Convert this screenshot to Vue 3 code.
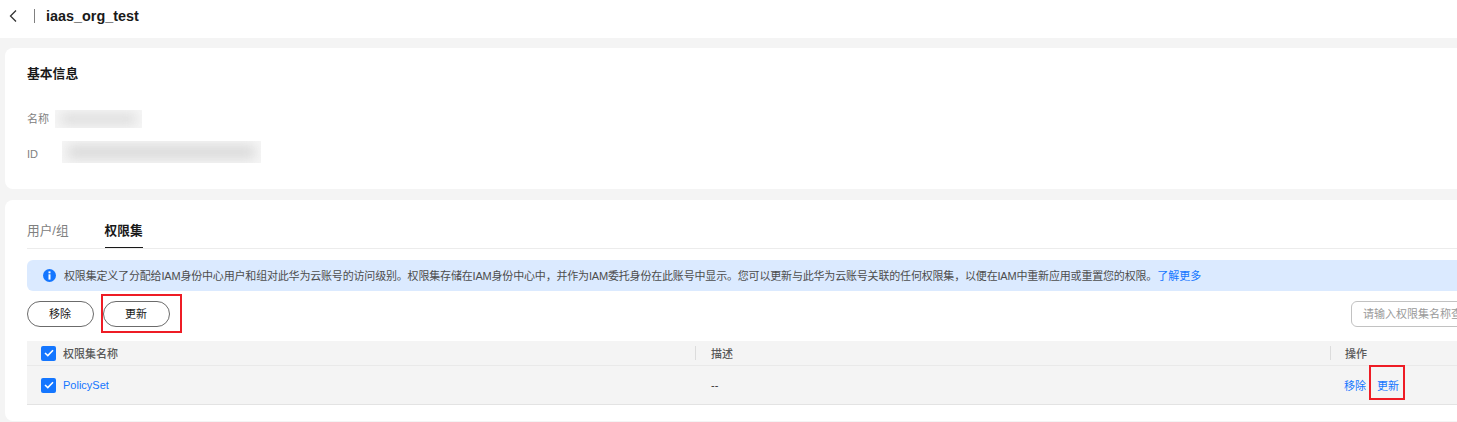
<script setup>
const message = [
  '权限集定义了分配给IAM身份中心用户和组对此华为云账号的访问级别。权限集存储在IAM身份中心中',
  '并作为IAM委托身份在此账号中显示。您可以更新与此华为云账号关联的任何权限集',
  '以便在IAM中重新应用或重置您的权限。',
].join('\uFF0C')
</script>

<template>
  <div class="viewport">
    <div class="page">
      <header class="topbar">
        <svg class="back" width="10" height="14" viewBox="0 0 10 14" fill="none" stroke="#333" stroke-width="1.3">
          <path d="M8 1.5 2.5 7 8 12.5" />
        </svg>
        <span class="sep"></span>
        <h1 class="title">iaas_org_test</h1>
      </header>

      <main class="content">
        <section class="card info">
          <h2 class="section-title">基本信息</h2>
          <div class="field name-field">
            <span class="label">名称</span>
            <span class="mask mask-name"><i></i></span>
          </div>
          <div class="field id-field">
            <span class="label id-label">ID</span>
            <span class="mask mask-id"><i></i></span>
          </div>
        </section>

        <section class="card details">
          <nav class="tabs">
            <span class="tab">用户/组</span>
            <span class="tab active">权限集</span>
          </nav>

          <div class="alert">
            <svg class="alert-icon" width="13" height="13" viewBox="0 0 13 13">
              <circle cx="6.5" cy="6.5" r="6.5" fill="#1476ff" />
              <rect x="5.5" y="2.4" width="2" height="1.9" fill="#fff" />
              <rect x="5.5" y="5.3" width="2" height="5.3" fill="#fff" />
            </svg>
            <span class="alert-text">{{ message }}</span>
            <a class="link learn">了解更多</a>
          </div>

          <div class="toolbar">
            <button class="btn">移除</button>
            <button class="btn marked">更新<span class="red-box box-btn"></span></button>
            <div class="search">请输入权限集名称查询</div>
          </div>

          <div class="table">
            <div class="row head">
              <div class="cell first">
                <span class="check"><svg width="10" height="8" viewBox="0 0 10 8" fill="none" stroke="#fff" stroke-width="1.6"><path d="M1 4 3.8 6.6 9 1.2" /></svg></span>
                <span>权限集名称</span>
              </div>
              <div class="cell divided desc">描述</div>
              <div class="cell divided">操作</div>
            </div>
            <div class="row body">
              <div class="cell first">
                <span class="check"><svg width="10" height="8" viewBox="0 0 10 8" fill="none" stroke="#fff" stroke-width="1.6"><path d="M1 4 3.8 6.6 9 1.2" /></svg></span>
                <a class="link">PolicySet</a>
              </div>
              <div class="cell plain">--</div>
              <div class="cell actions">
                <a class="link">移除</a>
                <a class="link marked">更新<span class="red-box box-link"></span></a>
              </div>
            </div>
          </div>
        </section>
      </main>
    </div>
  </div>
</template>

<style>
html, body { margin: 0; background: #f4f4f4; overflow: hidden; }
</style>

<style scoped>
.viewport {
  width: 1457px;
  height: 422px;
  overflow: hidden;
}
.page {
  width: 1560px;
  font-family: "Liberation Sans", "Noto Sans CJK SC", sans-serif;
  font-size: 12px;
  color: #191919;
}
.topbar {
  height: 38px;
  background: #fff;
  display: flex;
  align-items: center;
  box-sizing: border-box;
  padding: 0 0 6px 8px;
}
.back { display: block; }
.sep {
  width: 1px;
  height: 14px;
  background: #808080;
  margin-left: 16px;
}
.title {
  margin: 0 0 0 11px;
  font-size: 14.4px;
  font-weight: 700;
  line-height: 20px;
}
.content {
  padding: 10px 5px 0;
  display: flex;
  flex-direction: column;
  gap: 11px;
}
.card {
  background: #fff;
  border-radius: 8px;
  padding: 0 22px;
}
.info { height: 141px; box-sizing: border-box; padding-top: 17px; }
.section-title {
  margin: 0;
  font-size: 12.8px;
  line-height: 18px;
  font-weight: 700;
}
.field {
  display: flex;
  align-items: center;
  color: #808080;
  font-size: 11px;
}
.name-field { margin-top: 27px; height: 18px; }
.id-field { margin-top: 13px; height: 22px; }
.label { line-height: 18px; }
.id-label { margin-top: 4px; }
.mask {
  display: block;
  overflow: hidden;
  background: #f6f6f6;
  position: relative;
}
.mask i {
  position: absolute;
  inset: 4px 6px;
  background: #dadada;
  filter: blur(6px);
}
.mask-name { width: 87px; height: 18px; margin-left: 6px; }
.mask-id { width: 199px; height: 22px; margin-left: 24px; }
.details { height: 221px; box-sizing: border-box; padding-top: 20px; }
.tabs {
  display: flex;
  gap: 36px;
  height: 28px;
  border-bottom: 1px solid #ececec;
}
.tab {
  font-size: 12.7px;
  line-height: 23px;
  color: #808080;
  height: 28px;
  box-sizing: border-box;
}
.tab.active {
  color: #191919;
  font-weight: 700;
  border-bottom: 1px solid #191919;
  height: 28px;
}
.alert {
  margin-top: 11px;
  height: 31px;
  box-sizing: border-box;
  padding: 0 0 1px 16px;
  background: #dbeaff;
  border-radius: 6px;
  display: flex;
  align-items: center;
  white-space: nowrap;
  font-size: 11px;
  color: #4d4d4d;
}
.alert-icon { flex: none; margin-right: 8px; }
.alert-text { flex: none; letter-spacing: -0.18px; }
.link { color: #1476ff; text-decoration: none; }
.toolbar {
  margin-top: 10px;
  height: 26px;
  display: flex;
  align-items: center;
  gap: 9px;
}
.btn {
  width: 67px;
  height: 26px;
  box-sizing: border-box;
  border: 1px solid #6b6b6b;
  border-radius: 13px;
  background: #fff;
  font: inherit;
  font-size: 11px;
  color: #191919;
  padding: 0 1px 2px 0;
}
.marked { position: relative; }
.red-box {
  position: absolute;
  border: 2px solid #ee1c25;
  box-sizing: border-box;
  pointer-events: none;
}
.box-btn { left: -3px; top: -8px; width: 81px; height: 39px; }
.box-link { left: -8px; top: -12px; width: 36px; height: 35px; }
.search {
  margin-left: auto;
  width: 182px;
  height: 26px;
  box-sizing: border-box;
  border: 1px solid #c2c2c2;
  border-radius: 6px;
  font-size: 11px;
  line-height: 24px;
  padding-left: 11px;
  color: #9a9a9a;
  white-space: nowrap;
  overflow: hidden;
}
.table { margin-top: 14px; }
.row {
  display: grid;
  grid-template-columns: 668px 635px 1fr;
  background: #f4f4f4;
}
.head {
  height: 25px;
  border-bottom: 1px solid #e9e9e9;
  box-sizing: border-box;
  color: #595959;
  font-size: 11px;
  font-weight: 500;
}
.body {
  height: 39px;
  border-bottom: 1px solid #e3e3e3;
  box-sizing: border-box;
  font-size: 11px;
}
.cell {
  display: flex;
  align-items: center;
  position: relative;
}
.first { padding-left: 14px; gap: 7px; }
.head .cell.divided { padding-left: 15px; }
.head .cell.desc { padding-left: 16px; }
.head .cell.divided::before {
  content: "";
  position: absolute;
  left: 0;
  top: 5px;
  height: 14px;
  width: 1px;
  background: #dcdcdc;
}
.plain { padding-left: 16px; color: #333; }
.actions { padding-left: 14px; gap: 11px; }
.check {
  width: 15px;
  height: 15px;
  border-radius: 2px;
  background: #1476ff;
  display: flex;
  align-items: center;
  justify-content: center;
  flex: none;
}
</style>
